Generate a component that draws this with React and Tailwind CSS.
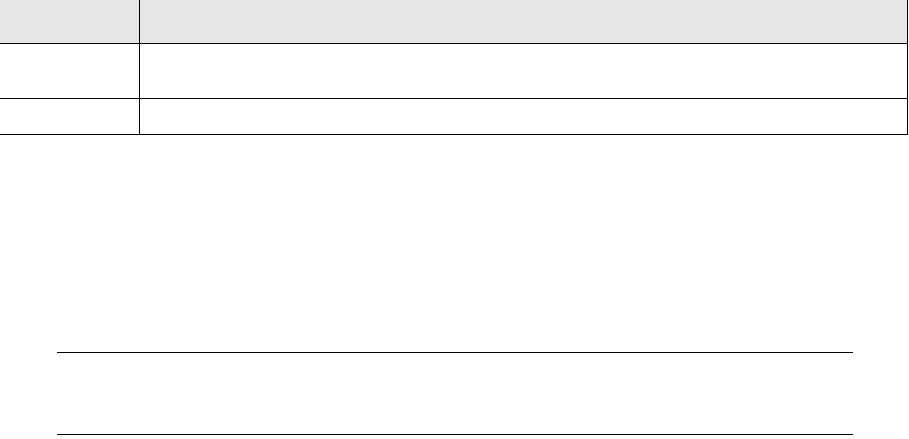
import React from 'react';

const rows = [
  { h: 'h-[55px]' },
  { h: 'h-[36px]' },
];

export default function App() {
  return (
    <div className="w-[909px] h-[439px] bg-white overflow-hidden font-['Liberation_Sans',sans-serif] text-sm text-black">
      <table className="w-[908px] border-collapse table-fixed">
        <colgroup>
          <col className="w-[139px]" />
          <col />
        </colgroup>
        <thead>
          <tr className="h-[43px] bg-[#e5e5e5]">
            <th className="border-r border-b border-black p-0" />
            <th className="border-r border-b border-black p-0" />
          </tr>
        </thead>
        <tbody>
          {rows.map((row, i) => (
            <tr key={i} className={row.h}>
              <td className="border-r border-b border-black p-0" />
              <td className="border-r border-b border-black p-0" />
            </tr>
          ))}
        </tbody>
      </table>

      <div className="mt-[217px] ml-[57px] w-[796px] h-[83px] border-t border-b border-black" />
    </div>
  );
}
